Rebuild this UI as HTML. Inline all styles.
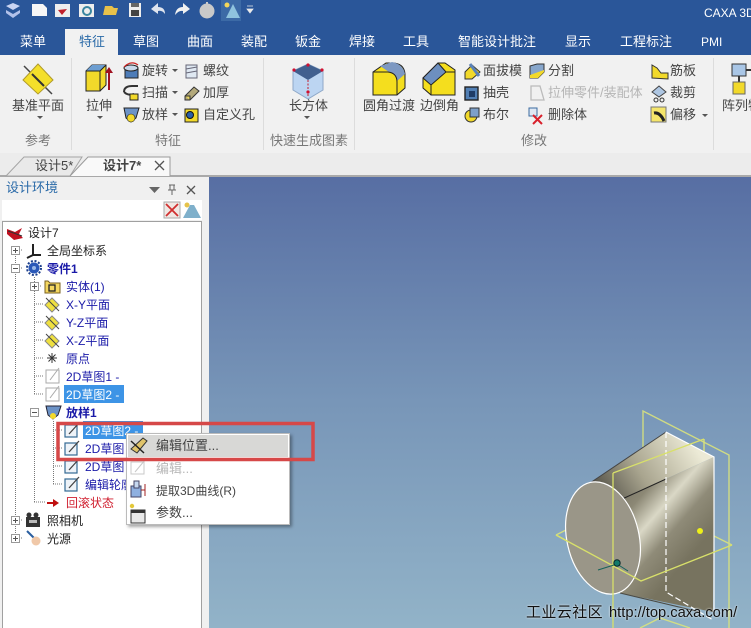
<!DOCTYPE html>
<html lang="zh"><head><meta charset="utf-8"><style>
html,body{margin:0;padding:0}
#r{position:relative;width:751px;height:628px;overflow:hidden;background:#f0f0f0;font-family:"Liberation Sans","Noto Sans CJK SC",sans-serif;font-size:13px;color:#444}
#r div,#r span.t{position:absolute}
.t{white-space:nowrap;line-height:18px;height:18px;transform:translateY(1px)}
.w{color:#fff}
.g{color:#777}
.b{color:#1a1aa8}
svg{position:absolute;left:0;top:0}
</style></head><body><div id="r">
<div style="left:0;top:0;width:751px;height:55px;background:#2a5699"></div>
<div style="left:65px;top:29px;width:53px;height:27px;background:#f1f1f1"></div>
<div style="left:0;top:55px;width:751px;height:98px;background:#f1f1f1"></div>
<div style="left:0;top:153px;width:751px;height:24px;background:#ececec"></div>
<div style="left:0;top:175px;width:751px;height:2px;background:#a9a9a9"></div>
<div style="left:209px;top:177px;width:542px;height:451px;background:linear-gradient(#576ea3,#7896b8 50%,#92b3c8)"></div>
<div style="left:0;top:177px;width:209px;height:451px;background:#f0f0f0"></div>
<div style="left:2px;top:221px;width:200px;height:410px;background:#fff;border:1px solid #a0a0a0;box-sizing:border-box"></div>
<div style="left:2px;top:200px;width:200px;height:20px;background:#fff"></div>
<div style="left:71px;top:58px;width:1px;height:92px;background:#dcdcdc"></div>
<div style="left:263px;top:58px;width:1px;height:92px;background:#dcdcdc"></div>
<div style="left:354px;top:58px;width:1px;height:92px;background:#dcdcdc"></div>
<div style="left:713px;top:58px;width:1px;height:92px;background:#dcdcdc"></div>

<span class="t w" style="left:704px;top:3px;font-size:12px">CAXA 3D</span>
<span class="t w" style="left:20px;top:32px">菜单</span>
<span class="t" style="left:79px;top:32px;color:#2a6aa8">特征</span>
<span class="t w" style="left:133px;top:32px">草图</span>
<span class="t w" style="left:187px;top:32px">曲面</span>
<span class="t w" style="left:241px;top:32px">装配</span>
<span class="t w" style="left:295px;top:32px">钣金</span>
<span class="t w" style="left:349px;top:32px">焊接</span>
<span class="t w" style="left:403px;top:32px">工具</span>
<span class="t w" style="left:458px;top:32px">智能设计批注</span>
<span class="t w" style="left:565px;top:32px">显示</span>
<span class="t w" style="left:620px;top:32px">工程标注</span>
<span class="t w" style="left:701px;top:32px;font-size:12px">PMI</span>

<span class="t" style="left:12px;top:96px">基准平面</span>
<span class="t" style="left:86px;top:96px">拉伸</span>
<span class="t" style="left:142px;top:61px">旋转</span>
<span class="t" style="left:142px;top:83px">扫描</span>
<span class="t" style="left:142px;top:105px">放样</span>
<span class="t" style="left:203px;top:61px">螺纹</span>
<span class="t" style="left:203px;top:83px">加厚</span>
<span class="t" style="left:203px;top:105px">自定义孔</span>
<span class="t" style="left:289px;top:96px">长方体</span>
<span class="t" style="left:363px;top:96px">圆角过渡</span>
<span class="t" style="left:420px;top:96px">边倒角</span>
<span class="t" style="left:483px;top:61px">面拔模</span>
<span class="t" style="left:483px;top:83px">抽壳</span>
<span class="t" style="left:483px;top:105px">布尔</span>
<span class="t" style="left:548px;top:61px">分割</span>
<span class="t" style="left:548px;top:83px;color:#b5b5b5">拉伸零件/装配体</span>
<span class="t" style="left:548px;top:105px">删除体</span>
<span class="t" style="left:670px;top:61px">筋板</span>
<span class="t" style="left:670px;top:83px">裁剪</span>
<span class="t" style="left:670px;top:105px">偏移</span>
<span class="t" style="left:722px;top:96px">阵列特</span>
<span class="t g" style="left:25px;top:131px">参考</span>
<span class="t g" style="left:155px;top:131px">特征</span>
<span class="t g" style="left:270px;top:131px">快速生成图素</span>
<span class="t g" style="left:521px;top:131px">修改</span>

<svg width="751" height="628" viewBox="0 0 751 628">
<defs>
<linearGradient id="top" gradientUnits="userSpaceOnUse" x1="600" y1="500" x2="690" y2="440"><stop offset="0" stop-color="#4f4d44"/><stop offset=".45" stop-color="#a9a58f"/><stop offset="1" stop-color="#ecead6"/></linearGradient>
<linearGradient id="side" gradientUnits="userSpaceOnUse" x1="620" y1="475" x2="700" y2="545"><stop offset="0" stop-color="#6f6b5e"/><stop offset=".28" stop-color="#8c8875"/><stop offset=".5" stop-color="#dad8c6"/><stop offset=".72" stop-color="#8f8b78"/><stop offset="1" stop-color="#77735f"/></linearGradient>
</defs>
<!-- doc tabs -->
<path d="M6 176L24 157H82L70 176Z" fill="#e9e9e9" stroke="#a5a5a5"/>
<path d="M70 176L88 157H170V176" fill="#f9f9f9" stroke="#9a9a9a"/>
<path d="M155 161l9 9M164 161l-9 9" stroke="#555" stroke-width="1.300"/>
<!-- title bar icons -->
<path d="M6 6L13 3L20 6L13 10Z" fill="#c9d4f2"/><path d="M6 10L13 14L20 10V13L13 18L6 13Z" fill="#b3c2ea"/>
<path d="M32 4H43L47 8V16H32Z" fill="#f6f6f6"/>
<rect x="55" y="4" width="15" height="13" fill="#eee"/><path d="M58 10L67 9L62 15Z" fill="#c0202c"/>
<rect x="79" y="4" width="15" height="13" fill="#eee"/><circle cx="87" cy="11" r="4" fill="none" stroke="#3a86a0" stroke-width="2"/>
<path d="M103 15L105 6H112L114 8H118L116 15Z" fill="#e8c14a"/>
<rect x="129" y="3" width="12" height="14" fill="#eee"/><rect x="131" y="10" width="8" height="6" fill="#444"/><rect x="131" y="3" width="8" height="4" fill="#666"/>
<path d="M151 9L158 3V7Q165 7 165 14Q162 10 158 11V14Z" fill="#dfe4ee"/>
<path d="M190 9L183 3V7Q176 7 175 15Q179 10 183 11V14Z" fill="#f1f1f1"/>
<path d="M207 2V5" stroke="#ccc" stroke-width="2"/><circle cx="207" cy="11" r="7.500" fill="#c9c9c9"/>
<rect x="221" y="0" width="20" height="21" fill="#3c6aa6"/><circle cx="227" cy="5" r="2.500" fill="#f3d75a"/><path d="M233 4L226 18H240Z" fill="#8fc3de"/>
<path d="M247 6H253M247 9L253 9L250 13Z" fill="#eaeaea" stroke="#eaeaea" stroke-width=".8"/>

<!-- ribbon: plane -->
<path d="M24 66L52 94" stroke="#444" stroke-width="1.500"/>
<path d="M38 64L53 80L38 94L23 80Z" fill="#f4df2a" stroke="#b09a2a"/>
<path d="M32 74L44 86" stroke="#333" stroke-width="2"/>
<path d="M37 116l3 3 3-3zM97 116l3 3 3-3zM304 116l3 3 3-3z" fill="#555"/>
<!-- extrude -->
<path d="M86 71L92 65H106V85L100 91H86Z" fill="#f2d92a" stroke="#222"/>
<path d="M86 71L92 65H106L100 71Z" fill="#6d9ed1"/><path d="M100 71H86V91H100ZM100 71L106 65" fill="none" stroke="#222"/>
<path d="M109 90V71" stroke="#a01020" stroke-width="2"/><path d="M105 73L109 67L113 73Z" fill="#a01020"/>
<!-- small icons -->
<rect x="125" y="69" width="13" height="9" fill="#4d7cb8" stroke="#222"/><ellipse cx="131" cy="68" rx="7" ry="3" fill="#c8d8ea" stroke="#222"/><path d="M124 67Q131 60 138 65" fill="none" stroke="#c22" stroke-width="1.200"/>
<path d="M124 92Q124 86 132 86H138M124 92Q128 96 134 94" fill="none" stroke="#333" stroke-width="2"/><rect x="130" y="94" width="8" height="6" fill="#f2d92a" stroke="#222"/>
<path d="M124 108H139L136 118L131 122L126 118Z" fill="#6c93c7" stroke="#222"/><circle cx="131" cy="118" r="4" fill="#f2d92a" stroke="#222" stroke-width=".6"/>
<path d="M186 65H197V78H186ZM186 69L197 67M186 73L197 71" fill="#dfe8f2" stroke="#667"/>
<path d="M185 96L194 87L199 91L190 100H185Z" fill="#b3a97b" stroke="#333"/><path d="M185 96H190V100" fill="#e8d55a" stroke="#333"/>
<rect x="185" y="109" width="13" height="13" fill="#f2d92a" stroke="#222"/><circle cx="190" cy="115" r="3.500" fill="#2b5fa8" stroke="#111"/>
<!-- box -->
<path d="M293 71L308 64L323 71V90L308 99L293 90Z" fill="#bcd5f2" stroke="#8ea8c8"/>
<path d="M293 71L308 64L323 71L308 80Z" fill="#41608f"/>
<path d="M308 80V97" stroke="#c22030" stroke-dasharray="2 1.500"/>
<g fill="#d01030"><circle cx="294" cy="70" r="1.600"/><circle cx="308" cy="65" r="1.600"/><circle cx="322" cy="70" r="1.600"/><circle cx="308" cy="92" r="1.600"/></g>
<!-- fillet / chamfer -->
<path d="M373 80V95H397L405 88V74Q404 63 392 63H386L373 72Z" fill="#f4de1e" stroke="#222"/>
<path d="M380 66L392 62Q403 64 405 74L397 81Q396 73 389 72Z" fill="#7d98c2"/><path d="M373 72H388Q397 73 397 82V95" fill="none" stroke="#222"/>
<path d="M423 78L438 63H445L455 70V95H431L423 88Z" fill="#f4de1e" stroke="#222"/>
<path d="M423 78L438 63L446 72L431 85Z" fill="#6d8fbf" stroke="#222"/><path d="M446 72L455 72M431 85V95" stroke="#222"/>
<path d="M465 72L472 65L480 72L472 79H465Z" fill="#f2d92a" stroke="#333"/><path d="M470 64L479 76" stroke="#5b82b8" stroke-width="3"/>
<rect x="465" y="87" width="13" height="13" fill="#517fb4" stroke="#222" stroke-width="1.400"/><rect x="469" y="91" width="6" height="6" fill="#1f3c66"/>
<circle cx="471" cy="116" r="6" fill="#f2d92a" stroke="#333"/><rect x="470" y="108" width="9" height="9" fill="#7ea0c9" stroke="#333"/>
<path d="M530 66L537 64H544V72L538 78H530Z" fill="#87a6cb" stroke="#333"/><path d="M530 75L544 70V72L538 78H530Z" fill="#f2d92a"/>
<path d="M531 86H540L544 100H531Z" fill="none" stroke="#bbb" stroke-width="1.300"/>
<rect x="529" y="108" width="8" height="8" fill="#dfe8f3" stroke="#3b6aa0"/><path d="M533 115l9 9M542 115l-9 9" stroke="#d8202c" stroke-width="2"/>
<path d="M652 78V65L657 68L661 73H668V79Z" fill="#f2d92a" stroke="#333"/>
<path d="M652 92L659 86L666 92L659 97Z" fill="#aec6e2" stroke="#444"/><circle cx="656" cy="100" r="2" fill="none" stroke="#333"/><circle cx="662" cy="100" r="2" fill="none" stroke="#333"/>
<rect x="651" y="107" width="15" height="15" fill="#f5e56a" stroke="#777"/><path d="M654 113Q660 112 664 121" fill="none" stroke="#222" stroke-width="3"/>
<path d="M172 69l3 3 3-3zM172 91l3 3 3-3zM172 113l3 3 3-3zM702 114l3 3 3-3z" fill="#555"/>
<rect x="732" y="64" width="14" height="12" fill="#a9c6e6" stroke="#333"/><path d="M746 70H751M739 76V82" stroke="#333" stroke-width="2"/><rect x="733" y="82" width="12" height="12" fill="#f2d92a" stroke="#666"/>

<!-- viewport model: planes behind the body -->
<path d="M643 447V411L729 455V628M556 535L570 528M556 535L580 548M732 545L714 536M640 628L660 618L690 628" fill="none" stroke="#d9e27c" stroke-width="1.400" opacity=".9"/>
<path d="M704 439V460" stroke="#d9e27c" stroke-width="1.400"/>
<path d="M590 483L666 432L714 457L620 500Z" fill="url(#top)"/>
<path d="M620 500L714 457L713 612L620 593Z" fill="url(#side)"/>
<path d="M620 500L666 479" stroke="#222"/><path d="M590 483L666 432" stroke="#444"/><path d="M620 593L700 612" stroke="#4a4a44"/>
<path d="M666 432L714 457V612" fill="none" stroke="#fff" stroke-width="1.200"/>
<path d="M666 432V592L713 620" fill="none" stroke="#fff" stroke-width="1.200" stroke-dasharray="6 3"/>
<ellipse cx="603" cy="538" rx="36" ry="57" transform="rotate(-13 603 538)" fill="#9a9688" stroke="#fff" stroke-width="1.200"/>
<path d="M613 473V628M556 535L641 581L732 545M613 473L704 439" fill="none" stroke="#d8e06a" stroke-width="1.300"/>
<circle cx="700" cy="531" r="3" fill="#eef018"/>
<path d="M598 570L617 564L628 571" fill="none" stroke="#15625a" stroke-width="1"/><circle cx="617" cy="563" r="3.200" fill="#127a6a" stroke="#0a2a2a"/>

<!-- panel header icons -->
<path d="M149 187h11l-5.500 6z" fill="#666"/>
<path d="M169 185h6M170 185v5h4v-5M172 190v5M168 190h8" fill="none" stroke="#666"/>
<path d="M187 186l8 8M195 186l-8 8" stroke="#555" stroke-width="1.300"/>
<rect x="164" y="202" width="16" height="16" fill="#f0e8e4" stroke="#aaa"/><path d="M166 204l12 12M178 204l-12 12" stroke="#d03030" stroke-width="1.800"/>
<path d="M190 205L183 218H201L194 205Z" fill="#7fb0cb"/><circle cx="187" cy="205" r="2.500" fill="#e6c34a"/>

<!-- tree lines -->
<path d="M15.500 250V538M34.500 277V394M34.500 421V502M53.500 421V484M15 250h8M15 268h8M34 286h8M34 304h10M34 322h10M34 340h10M34 358h10M34 376h10M34 394h10M34 412h6M53 430h10M53 448h10M53 466h10M53 484h10M34 502h12M15 520h8M15 538h8" stroke="#777" stroke-dasharray="1 1" fill="none"/>
<g fill="#fff" stroke="#999"><rect x="11.500" y="246.500" width="8" height="8"/><rect x="11.500" y="264.500" width="8" height="8"/><rect x="30.500" y="282.500" width="8" height="8"/><rect x="30.500" y="408.500" width="8" height="8"/><rect x="11.500" y="516.500" width="8" height="8"/><rect x="11.500" y="534.500" width="8" height="8"/></g>
<path d="M13 250.500h5M15.500 248v5M13 268.500h5M32 286.500h5M34.500 284v5M32 412.500h5M13 520.500h5M15.500 518v5M13 538.500h5M15.500 536v5" stroke="#555"/>

<!-- tree icons -->
<path d="M7 229L15 232L22 228L19 234L23 238L14 240L7 234Z" fill="#c01020"/><path d="M8 231L22 236" stroke="#333"/>
<path d="M33 244V255H41M33 255L27 258" fill="none" stroke="#222" stroke-width="2"/>
<circle cx="34" cy="268" r="5.500" fill="#2a58b8"/><circle cx="34" cy="268" r="7" fill="none" stroke="#1c3f8c" stroke-width="2" stroke-dasharray="2 1.700"/><circle cx="34" cy="268" r="2" fill="#9ab8e8"/>
<path d="M45 281H48L50 283H60V293H45Z" fill="#f4d760" stroke="#7a6020"/><rect x="49" y="285" width="6" height="6" fill="none" stroke="#222" stroke-width="1.300"/>
<path d="M52 298L59 305L52 312L45 305Z" fill="#efe040" stroke="#888"/><path d="M46 298L59 311" stroke="#444"/>
<path d="M52 316L59 323L52 330L45 323Z" fill="#efe040" stroke="#888"/><path d="M46 316L59 329" stroke="#444"/>
<path d="M52 334L59 341L52 348L45 341Z" fill="#efe040" stroke="#888"/><path d="M46 334L59 347" stroke="#444"/>
<path d="M47 358h10M52 353v10M48.500 354.500l7 7M55.500 354.500l-7 7" stroke="#333"/>
<g fill="none" stroke="#aaa"><rect x="46" y="370" width="13" height="13"/><path d="M50 380L59 368"/><rect x="46" y="388" width="13" height="13"/><path d="M50 398L59 386"/></g>
<path d="M46 406H61L58 415L53 419L48 415Z" fill="#6c93c7" stroke="#223"/><circle cx="53" cy="416" r="3" fill="#f2d92a"/>
<g fill="#eef3f8" stroke="#346a94" stroke-width="1.200"><rect x="65" y="425" width="12" height="12"/><rect x="65" y="443" width="12" height="12"/><rect x="65" y="461" width="12" height="12"/><rect x="65" y="479" width="12" height="12"/></g>
<path d="M69 434L79 423M69 452L79 441M69 470L79 459M69 488L79 477" stroke="#444" stroke-width="1.300"/>
<path d="M47 502h6v-3l6 4-6 4v-3h-6z" fill="#c01010"/>
<rect x="26" y="517" width="14" height="10" fill="#333"/><circle cx="29" cy="515" r="2.500" fill="#333"/><circle cx="36" cy="515" r="2.500" fill="#333"/><rect x="29" y="520" width="8" height="3" fill="#bbb"/>
<path d="M27 531L37 541" stroke="#2a5fa0" stroke-width="2"/><circle cx="36" cy="541" r="4.500" fill="#f0c8a8"/>
</svg>

<span class="t" style="left:6px;top:178px;color:#2a6aa8">设计环境</span>
<span class="t" style="left:35px;top:156px">设计5*</span>
<span class="t" style="left:103px;top:156px;font-weight:bold">设计7*</span>

<span class="t" style="left:28px;top:223px;font-size:12px;color:#222">设计7</span>
<span class="t" style="left:47px;top:241px;font-size:12px;color:#222">全局坐标系</span>
<span class="t b" style="left:47px;top:259px;font-size:12px;font-weight:bold">零件1</span>
<span class="t b" style="left:66px;top:277px;font-size:12px">实体(1)</span>
<span class="t b" style="left:66px;top:295px;font-size:12px">X-Y平面</span>
<span class="t b" style="left:66px;top:313px;font-size:12px">Y-Z平面</span>
<span class="t b" style="left:66px;top:331px;font-size:12px">X-Z平面</span>
<span class="t b" style="left:66px;top:349px;font-size:12px">原点</span>
<span class="t b" style="left:66px;top:367px;font-size:12px">2D草图1 -</span>
<div style="left:64px;top:385px;width:60px;height:18px;background:#3d94e6"></div>
<span class="t w" style="left:66px;top:385px;font-size:12px">2D草图2 -</span>
<span class="t b" style="left:66px;top:403px;font-size:12px;font-weight:bold">放样1</span>
<div style="left:83px;top:421px;width:60px;height:18px;background:#3d94e6"></div>
<span class="t w" style="left:85px;top:421px;font-size:12px">2D草图2 -</span>
<span class="t b" style="left:85px;top:439px;font-size:12px">2D草图</span>
<span class="t b" style="left:85px;top:457px;font-size:12px">2D草图</span>
<span class="t b" style="left:85px;top:475px;font-size:12px">编辑轮廓</span>
<span class="t" style="left:66px;top:493px;font-size:12px;color:#d02030">回滚状态</span>
<span class="t" style="left:47px;top:511px;font-size:12px;color:#222">照相机</span>
<span class="t" style="left:47px;top:529px;font-size:12px;color:#222">光源</span>

<!-- context menu -->
<div style="left:126px;top:433px;width:164px;height:92px;background:#fff;border:1px solid #bbb;box-sizing:border-box;box-shadow:2px 2px 3px rgba(0,0,0,.35)"></div>
<div style="left:128px;top:435px;width:160px;height:22px;background:#d8d8d6"></div>
<span class="t" style="left:156px;top:436px">编辑位置...</span>
<span class="t" style="left:156px;top:459px;color:#b8b8b8">编辑...</span>
<span class="t" style="left:156px;top:481px;font-size:12px">提取3D曲线(R)</span>
<span class="t" style="left:156px;top:503px">参数...</span>
<svg width="751" height="628" viewBox="0 0 751 628">
<path d="M131 449L143 438L147 441L137 453Z" fill="#dfc36a" stroke="#333"/><path d="M131 441L144 453" stroke="#222" stroke-width="1.500"/>
<rect x="131" y="462" width="13" height="12" fill="none" stroke="#c8c8c8"/><path d="M135 472L145 460" stroke="#c8c8c8"/>
<rect x="131" y="486" width="10" height="11" fill="#8fb0e0" stroke="#446"/><rect x="134" y="481" width="5" height="7" fill="#c6d7ef" stroke="#446"/><path d="M141 490h4M145 484v12" stroke="#a02020"/>
<rect x="131" y="510" width="14" height="13" fill="#e8e8e8" stroke="#333"/><rect x="131" y="510" width="14" height="3" fill="#333"/><circle cx="132" cy="506" r="2.200" fill="#e3c83a"/>
<rect x="58" y="423.500" width="255" height="36" fill="none" stroke="#d64848" stroke-width="3.500"/>
</svg>

<!-- watermark -->
<span class="t" style="left:526px;top:602px;font-size:15px;line-height:20px;letter-spacing:.4px;color:#111;text-shadow:0 0 2px #fff">工业云社区</span>
<span class="t" style="left:609px;top:603px;font-size:14.700px;color:#111;text-shadow:0 0 2px #fff">http://top.caxa.com/</span>
</div></body></html>
